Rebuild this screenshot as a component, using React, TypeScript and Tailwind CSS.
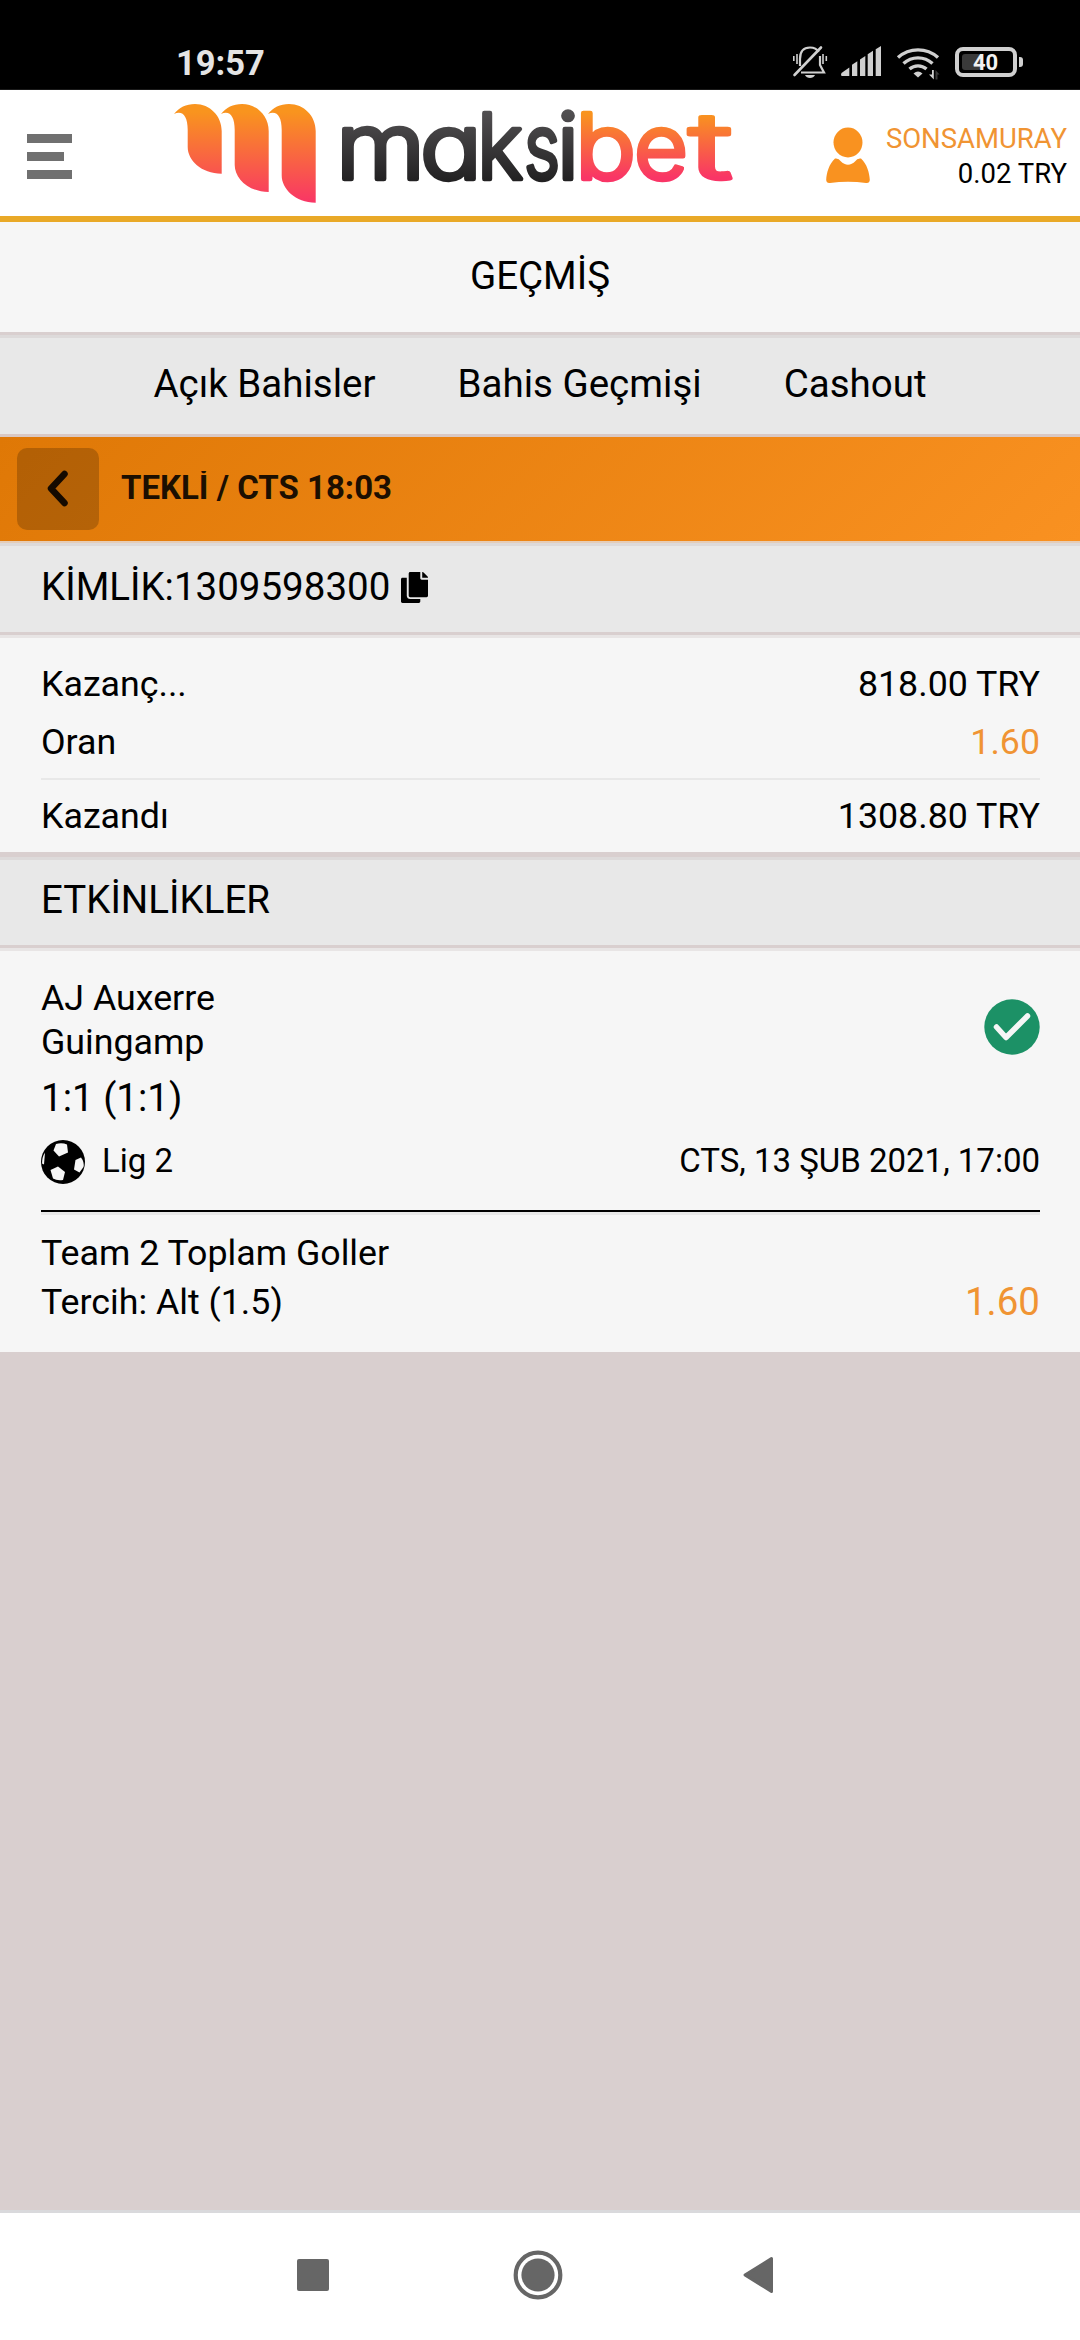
import { FaCopy } from "react-icons/fa";

const tabs = ["Açık Bahisler", "Bahis Geçmişi", "Cashout"];

function StatusBar() {
    return (
        <div className="h-[90px] bg-black flex items-end justify-between pl-[176px] pr-[57px] border-b border-[#1a1a1a]">
            <span className="text-[34.5px] leading-[40px] font-bold text-[#e4e4e4] mb-[6px]">19:57</span>
            <div className="flex items-center mb-[7px]">
                <svg width="36" height="36" viewBox="792 44 36 36" fill="none" stroke="#d0d0d0" strokeWidth="2.2">
                    <path d="M800 66V59C800 51 804 47.5 810 47.5C814 47.5 817 49 818.5 52" />
                    <path d="M820 56V65L824 72.5H801" />
                    <path d="M794.5 75L821 47.5" strokeWidth="2.6" strokeLinecap="round" />
                    <path d="M793.8 56V61M797 54V64M823 54V64M826.3 56V61" strokeWidth="1.6" />
                    <path d="M805 75H815C813.5 79 806.5 79 805 75Z" fill="#d0d0d0" stroke="none" />
                </svg>
                <svg className="ml-[12px]" width="42" height="36" viewBox="840 44 42 36" fill="#d0d0d0">
                    <path d="M849.3 67.5V76H841.5Q840.5 75 841.5 73Z" />
                    <path d="M852 64.8L857.3 61.3V76H852Z" />
                    <path d="M860 59.5L865.3 56V76H860Z" />
                    <path d="M867.7 54.3L873 50.8V76H867.7Z" />
                    <path d="M875.7 49.3L881 46V76H875.7Z" />
                </svg>
                <svg className="ml-[14px]" width="45" height="40" viewBox="896 42 45 40" fill="none" stroke="#d0d0d0" strokeWidth="3.4">
                    <path d="M898 57.5A30 30 0 0 1 938 57.5" />
                    <path d="M903.5 63.5A21.5 21.5 0 0 1 932.5 63.5" />
                    <path d="M909.5 69A13 13 0 0 1 926.5 69" />
                    <path d="M913.5 73.5Q918 69.5 922.5 73.5L918 77.5Z" fill="#d0d0d0" stroke="none" />
                    <path d="M933.8 70V79.5L929 74.5H932V70Z" fill="#d0d0d0" stroke="none" />
                    <path d="M935.5 79.5V70L939.5 74.5H937.5V79.5Z" fill="#3a3a3a" stroke="none" />
                </svg>
                <div className="ml-[14px] flex items-center gap-[2px]">
                    <div className="w-[62px] h-[30px] rounded-[8px] border-[4px] border-[#d0d0d0] relative">
                        <div className="absolute left-[3px] top-[3px] w-[19px] h-[16px] rounded-[3px] bg-[#3a3a3a]" />
                        <span className="absolute left-[14px] top-0 text-[22px] leading-[23px] font-bold text-[#f2f2f2]">40</span>
                    </div>
                    <div className="w-[4px] h-[10px] rounded-r-[3px] bg-[#d0d0d0]" />
                </div>
            </div>
        </div>
    );
}

// x position and drawn width of each wordmark letter
const darkLetters = [
    { char: "m", x: 336, width: 89 },
    { char: "a", x: 420, width: 62 },
    { char: "k", x: 477, width: 46 },
    { char: "s", x: 524, width: 36 },
    { char: "i", x: 557, width: 22 },
];

const flameLetters = [
    { char: "b", x: 575, width: 61 },
    { char: "e", x: 634, width: 54 },
    { char: "t", x: 689, width: 43 },
];

function Logo() {
    return (
        <svg className="overflow-visible" width="562" height="110" viewBox="172 98 562 110">
            <defs>
                <linearGradient id="flame" gradientUnits="userSpaceOnUse" x1="0" y1="104" x2="0" y2="203">
                    <stop offset="0.08" stopColor="#f9941e" />
                    <stop offset="1" stopColor="#f93566" />
                </linearGradient>
                <linearGradient id="flameText" gradientUnits="userSpaceOnUse" x1="0" y1="108" x2="0" y2="181">
                    <stop offset="0.08" stopColor="#f9941e" />
                    <stop offset="0.95" stopColor="#f93566" />
                </linearGradient>
                <linearGradient id="coal" gradientUnits="userSpaceOnUse" x1="0" y1="108" x2="0" y2="181">
                    <stop offset="0" stopColor="#545254" />
                    <stop offset="1" stopColor="#222122" />
                </linearGradient>
            </defs>
            <g fill="url(#flame)">
                <path d="M174 114C179 107.500 186 104 195 104C210 104 221.700 116 221.700 131V173.700C201 173.700 187.700 160 187.700 147V130C187.700 116 182.500 110 174 114Z" />
                <path d="M221 114C226 107.500 233 104 242 104C257 104 268.700 116 268.700 131V192C248 192 234.700 178 234.700 165V130C234.700 116 229.500 110 221 114Z" />
                <path d="M268 114C273 107.500 280 104 289 104C304 104 315.700 116 315.700 131V202.700C295 202.700 281.700 188.500 281.700 175.500V130C281.700 116 276.500 110 268 114Z" />
            </g>
            <g className="font-[Inter] text-[91px] font-light [font-feature-settings:'cv11'_1]" strokeWidth="4.5" strokeLinejoin="round">
                <text y="178.500" fill="url(#coal)" stroke="url(#coal)">
                    {darkLetters.map((l) => (
                        <tspan key={l.char} x={l.x} textLength={l.width} lengthAdjust="spacingAndGlyphs">{l.char}</tspan>
                    ))}
                </text>
                <text y="178.500" fill="url(#flameText)" stroke="url(#flameText)">
                    {flameLetters.map((l) => (
                        <tspan key={l.char} x={l.x} textLength={l.width} lengthAdjust="spacingAndGlyphs">{l.char}</tspan>
                    ))}
                </text>
            </g>
        </svg>
    );
}

function Header() {
    return (
        <header className="h-[132px] bg-white border-b-[6px] border-[#e9a927] flex items-start justify-between pl-[27px] pr-[13px]">
            <div className="mt-[44px] flex flex-col gap-[9px]">
                <div className="w-[45px] h-[9px] bg-[#707070]" />
                <div className="w-[37px] h-[9px] bg-[#707070]" />
                <div className="w-[45px] h-[9px] bg-[#707070]" />
            </div>
            <div className="mt-[8px] ml-[8px]">
                <Logo />
            </div>
            <div className="mt-[31px] flex">
                <svg className="mt-[6px]" width="46" height="58" viewBox="825 127 46 58" fill="#f99220">
                    <ellipse cx="848" cy="142.500" rx="14.500" ry="15" />
                    <path d="M835 158.500Q839 158 840.500 161Q848 168.500 855.500 161Q857 158 861 158.500C867 164 869.500 173 869.800 180Q869.500 183.500 866 183Q848 180.500 830 183Q826.500 183.500 826.200 180C826.500 173 829 164 835 158.500Z" />
                </svg>
                <div className="w-[196px] text-right text-[27.5px] leading-[35px]">
                    <div className="text-[#f09433]">SONSAMURAY</div>
                    <div>0.02 TRY</div>
                </div>
            </div>
        </header>
    );
}

function Divider({ className = "" }) {
    return <div className={`h-[6px] border-t-[3px] border-[#d9cfcf] ${className}`} />;
}

function SoccerBall() {
    return (
        <svg width="44" height="44" viewBox="0 0 44 44">
            <circle cx="22" cy="22" r="22" fill="#000" />
            <g fill="#f6f6f6">
                <path d="M15 4Q21 2.500 26 4.500L27 12.500L18 16.500L12.500 10.500Z" />
                <path d="M9.500 30L17 26.500L24 32L22 40Q16 41 12 38.500Z" />
                <path d="M40 17.500Q43.500 22 42.500 27L38.500 32.500L33 29.500L34.500 20Z" />
                <path d="M4 12.500L3 24.500L1 23.500Q1 17 4 12.500Z" />
            </g>
        </svg>
    );
}

function Event() {
    return (
        <section className="h-[401px] bg-[#f6f6f6] pl-[41px] pr-[40px] pt-[25px]">
            <div className="flex items-center justify-between">
                <div className="text-[35.75px] leading-[44px]">
                    <div>AJ Auxerre</div>
                    <div>Guingamp</div>
                </div>
                <svg className="mt-[14px]" width="56" height="56" viewBox="0 0 56 56">
                    <circle cx="28" cy="28" r="27.700" fill="#1c9166" />
                    <path d="M12.500 28L22 38.500L43.500 17" fill="none" stroke="#f6f6f6" strokeWidth="5.500" strokeLinecap="round" strokeLinejoin="round" />
                </svg>
            </div>
            <div className="mt-[10px] text-[38.5px] leading-[48px]">1:1 (1:1)</div>
            <div className="mt-[18px] h-[44px] flex items-center text-[33px] leading-[41px]">
                <SoccerBall />
                <span className="ml-[17px] mb-[3px]">Lig 2</span>
                <span className="ml-auto mb-[3px]">CTS, 13 ŞUB 2021, 17:00</span>
            </div>
            <div className="mt-[26px] h-[5px] bg-[#e8e8e8] border-t-2 border-black" />
            <div className="mt-[14px] flex items-end justify-between text-[35.75px] leading-[49px]">
                <div>
                    <div>Team 2 Toplam Goller</div>
                    <div>Tercih: Alt (1.5)</div>
                </div>
                <div className="text-[38.5px] mb-px text-[#f09433]">1.60</div>
            </div>
        </section>
    );
}

export default function App() {
    return (
        <div className="w-[1080px] h-[2340px] flex flex-col overflow-hidden bg-[#d9cfcf] text-black font-[Roboto,sans-serif]">
            <StatusBar />
            <Header />
            <div className="h-[110px] bg-[#f6f6f6] text-[38.5px] flex items-center justify-center pb-[3px]">GEÇMİŞ</div>
            <Divider className="bg-[#dddada]" />
            <nav className="h-[96px] bg-[#e8e8e8] text-[38.5px] flex items-center justify-center gap-[82px] pb-[5px]">
                {tabs.map((tab) => (
                    <span key={tab}>{tab}</span>
                ))}
            </nav>
            <div className="h-[3px] bg-[#d9c8c4]" />
            <div className="h-[104px] bg-[linear-gradient(135deg,#df7806,#f99121)] flex items-center pl-[17px]">
                <button className="w-[82px] h-[82px] rounded-[10px] bg-black/20 flex items-center justify-center">
                    <svg width="24" height="38" viewBox="0 0 24 38" fill="none" stroke="#150a00" strokeWidth="6.500" strokeLinecap="round" strokeLinejoin="round">
                        <path d="M18.500 4L5 18.500L18.500 33" />
                    </svg>
                </button>
                <span className="ml-[22px] mb-[3px] text-[33px] leading-[33px] font-bold text-[#1c0f01] overflow-hidden">TEKLİ / CTS 18:03</span>
            </div>
            <div className="h-[5px] bg-[#dddada] border-t-2 border-[#e5cdb8]" />
            <div className="h-[86px] bg-[#e8e8e8] text-[38.5px] flex items-center pl-[41px] pb-[5px]">
                KİMLİK:1309598300
                <FaCopy className="ml-[11px] mt-[2px] w-[27px] h-[31px]" />
            </div>
            <Divider className="bg-[#e8e5e5]" />
            <section className="h-[214px] bg-[#f6f6f6] pl-[41px] pr-[40px] pt-[17px] text-[35.75px] leading-[58px]">
                <div className="flex justify-between">
                    <span>Kazanç...</span>
                    <span>818.00 TRY</span>
                </div>
                <div className="flex justify-between pb-[7px] border-b-2 border-[#e8e8e8]">
                    <span>Oran</span>
                    <span className="text-[#f09433]">1.60</span>
                </div>
                <div className="flex justify-between mt-[7px]">
                    <span>Kazandı</span>
                    <span>1308.80 TRY</span>
                </div>
            </section>
            <div className="h-[8px] bg-[#dddada] border-t-[5px] border-[#d9cfcf]" />
            <div className="h-[85px] bg-[#e8e8e8] text-[38.5px] flex items-center pl-[41px] pb-[5px]">ETKİNLİKLER</div>
            <Divider className="bg-[#e8e5e5]" />
            <Event />
            <div className="mt-auto h-[130px] bg-white border-t-[3px] border-[#d9d9dc] flex items-center pl-[297px] pb-[3px]">
                <div className="w-[32px] h-[32px] rounded-[2px] bg-[#666]" />
                <svg className="ml-[184px]" width="50" height="50" viewBox="0 0 50 50" fill="#666">
                    <circle cx="25" cy="25" r="22.300" fill="none" stroke="#666" strokeWidth="4.200" />
                    <circle cx="25" cy="25" r="16.600" />
                </svg>
                <svg className="ml-[179px]" width="32" height="38" viewBox="0 0 32 38" fill="#666" stroke="#666" strokeWidth="3" strokeLinejoin="round">
                    <path d="M29.500 2.500V35.500L3 19Z" />
                </svg>
            </div>
        </div>
    );
}
